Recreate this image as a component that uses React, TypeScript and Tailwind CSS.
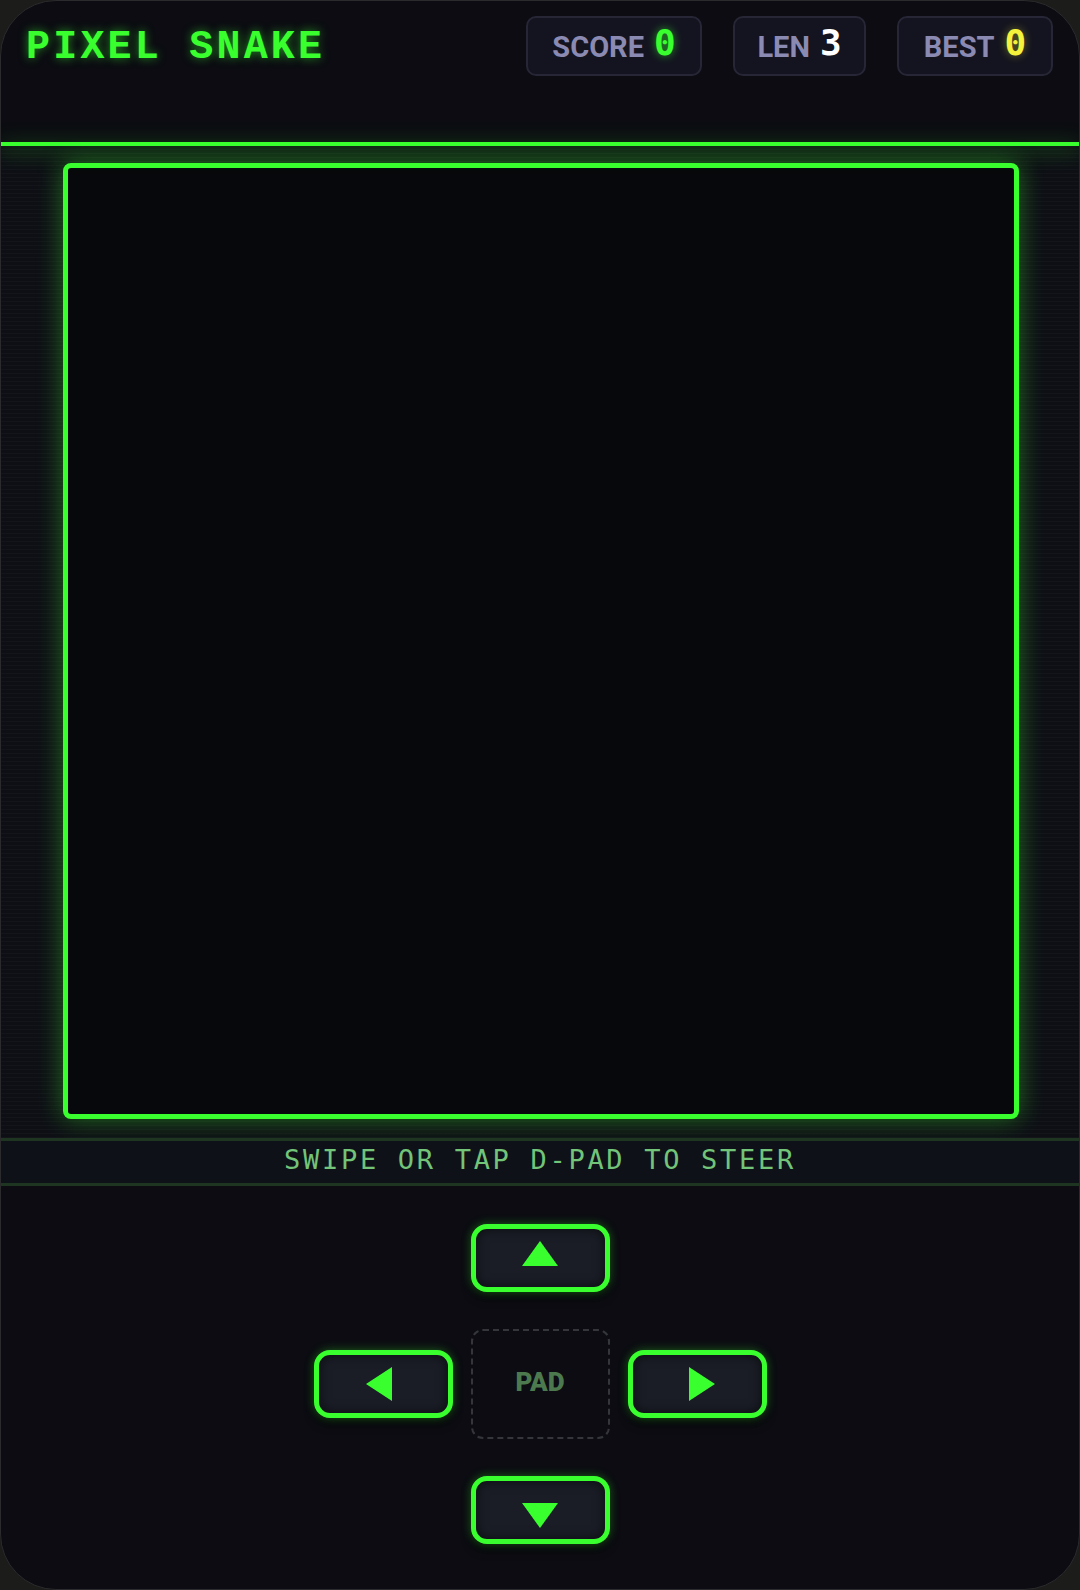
import React from 'react';

const mono = '"Liberation Mono", "DejaVu Sans Mono", monospace';
const sansMono = '"DejaVu Sans Mono", "Liberation Mono", monospace';

function Stat({ label, value, valueClass, width }: { label: string; value: string; valueClass: string; width: string }) {
    return (
        <div className={`${width} h-[60px] flex items-center justify-center gap-[10px] rounded-[10px] border-2 border-[#262636] bg-[#141420]`}>
            <span className="text-[29px] font-bold text-[#8a8ab2] leading-none mt-[2px]" style={{ fontFamily: 'Roboto, "Liberation Sans", sans-serif' }}>
                {label}
            </span>
            <span className={`text-[36px] font-bold leading-none -mt-[6px] ${valueClass}`} style={{ fontFamily: sansMono }}>
                {value}
            </span>
        </div>
    );
}

function DirButton({ dir }: { dir: 'up' | 'down' | 'left' | 'right' }) {
    const shape = {
        up: <svg width="36" height="25" viewBox="0 0 36 25" className="-translate-y-[5px]"><polygon points="18,0 36,25 0,25" fill="#39ff2e" /></svg>,
        down: <svg width="36" height="25" viewBox="0 0 36 25" className="translate-y-[5px]"><polygon points="0,0 36,0 18,25" fill="#39ff2e" /></svg>,
        left: <svg width="26" height="34" viewBox="0 0 26 34" className="-translate-x-[4px]"><polygon points="26,0 26,34 0,17" fill="#39ff2e" /></svg>,
        right: <svg width="26" height="34" viewBox="0 0 26 34" className="translate-x-[5px]"><polygon points="0,0 26,17 0,34" fill="#39ff2e" /></svg>,
    }[dir];
    return (
        <button className="w-[139px] h-[68px] flex items-center justify-center rounded-[16px] border-[5px] border-[#39ff2e] bg-[#1a1d26] shadow-[0_0_10px_rgba(57,255,46,0.35),0_6px_10px_rgba(0,0,0,0.6),inset_0_0_12px_rgba(0,0,0,0.6)]">
            {shape}
        </button>
    );
}

export default function App() {
    return (
        <div className="min-h-screen w-full bg-[#1c1c1b]">
            <div className="w-[1080px] h-[1590px] rounded-[56px] border border-[#2b2b2d] bg-[#0c0c12] overflow-hidden flex flex-col">
                <header className="h-[141px] flex justify-between items-start pl-[25px] pr-[26px] pt-[15px]">
                    <h1
                        className="mt-[12px] text-[40px] font-bold tracking-[0.08em] leading-none text-[#39ff2e] [text-shadow:0_0_10px_rgba(57,255,46,0.55)]"
                        style={{ fontFamily: mono }}
                    >
                        PIXEL SNAKE
                    </h1>
                    <div className="flex gap-[31px]">
                        <Stat label="SCORE" value="0" width="w-[176px]" valueClass="text-[#39ff2e] [text-shadow:0_0_8px_rgba(57,255,46,0.6)]" />
                        <Stat label="LEN" value="3" width="w-[133px]" valueClass="text-white" />
                        <Stat label="BEST" value="0" width="w-[156px]" valueClass="text-[#f4f23a] [text-shadow:0_0_8px_rgba(244,242,58,0.4)]" />
                    </div>
                </header>

                <div className="h-[4px] bg-[#39ff2e] shadow-[0_4px_20px_rgba(57,255,46,0.5)] relative z-10" />

                <section className="pt-[17px] pb-[19px] px-[62px] bg-[#0e0f15] bg-[repeating-linear-gradient(0deg,rgba(255,255,255,0.025)_0px,rgba(255,255,255,0.025)_1px,transparent_1px,transparent_4px)]">
                    <div className="w-[956px] h-[956px] rounded-[8px] border-[5px] border-[#39ff2e] bg-[#07080b] shadow-[0_0_26px_rgba(57,255,46,0.4)]" />
                </section>

                <div className="h-[48px] flex items-center justify-center border-y-[3px] border-[#1d3521] bg-[#0f1118]">
                    <p className="-mt-[5px] text-[27px] tracking-[0.1em] leading-none text-[#72c479]" style={{ fontFamily: sansMono }}>
                        SWIPE OR TAP D-PAD TO STEER
                    </p>
                </div>

                <section className="flex-1 flex justify-center pt-[38px]">
                    <div className="grid grid-cols-[139px_139px_139px] grid-rows-[68px_110px_68px] gap-x-[18px] gap-y-[37px]">
                        <div />
                        <DirButton dir="up" />
                        <div />
                        <div className="self-center"><DirButton dir="left" /></div>
                        <div className="flex items-center justify-center rounded-[12px] border-2 border-dashed border-[#34363c]">
                            <span className="-mt-[4px] text-[26px] font-black text-[#4c7a4e]" style={{ fontFamily: 'Roboto, "Liberation Sans", sans-serif' }}>
                                PAD
                            </span>
                        </div>
                        <div className="self-center"><DirButton dir="right" /></div>
                        <div />
                        <DirButton dir="down" />
                        <div />
                    </div>
                </section>
            </div>
        </div>
    );
}
